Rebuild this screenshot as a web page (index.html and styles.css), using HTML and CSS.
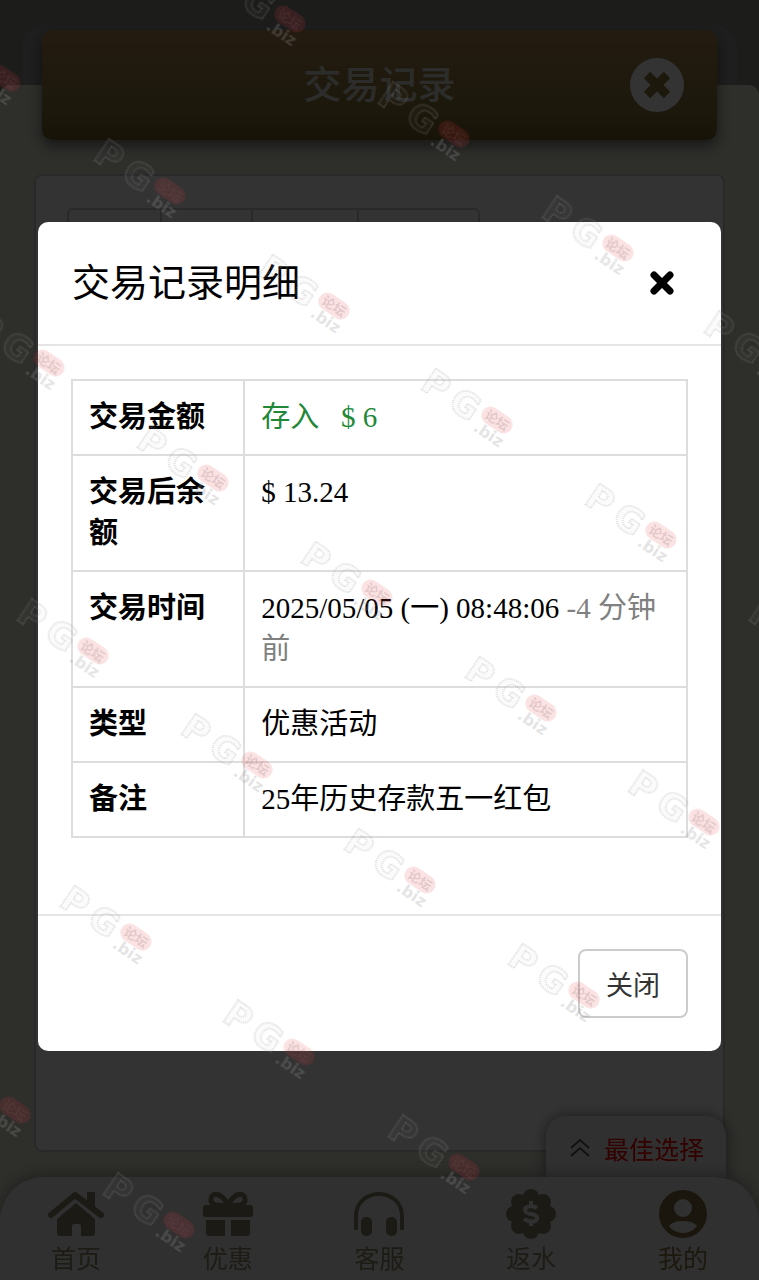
FILE: index.html
```html
<!DOCTYPE html>
<html lang="zh-CN">
<head>
    <meta charset="UTF-8">
    <meta name="viewport" content="width=device-width, initial-scale=1.0">
    <title>交易记录</title>
    <link rel="stylesheet" href="styles.css">
</head>
<body>

    <div class="page">
        <header class="page-header">
            <div class="title-bar">
                <h1>交易记录</h1>
                <button class="title-close" type="button" aria-label="关闭页面">
                    <svg viewBox="0 0 54 54" width="54" height="54">
                        <circle cx="27" cy="27" r="27"/>
                        <path d="M17 17L37 37M37 17L17 37"/>
                    </svg>
                </button>
            </div>
        </header>
        <main class="content">
            <section class="card">
                <ul class="filter">
                    <li class="short"></li>
                    <li class="short"></li>
                    <li class="medium"></li>
                    <li class="long"></li>
                </ul>
            </section>
        </main>
    </div>

    <div class="bottom">
        <button class="best" type="button">
            <svg viewBox="0 0 20 20" width="20" height="20"><path d="M1 10L10 2L19 10M1 18L10 10L19 18"/></svg>
            <span>最佳选择</span>
        </button>
        <nav class="nav">
            <a href="#">
                <svg viewBox="0 0 56 50" width="56" height="50">
                    <path class="line" d="M3 26L27 6L53 26"/>
                    <path d="M39 3h8v17l-8-7zM28 14L47 30v14q0 3-3 3H33V37q0-2-2-2h-5q-2 0-2 2v10H12q-3 0-3-3V30z"/>
                </svg>
                <span>首页</span>
            </a>
            <a href="#">
                <svg viewBox="0 0 56 50" width="56" height="50">
                    <path class="ring" d="M28 16C22 4 12 2 11 10C10 16 17 17 28 16C39 17 46 16 45 10C44 2 34 4 28 16Z"/>
                    <path d="M5 16h46q2 0 2 2v8q0 2-2 2H5q-2 0-2-2v-8q0-2 2-2zM6 31h19v16H9q-3 0-3-3zM31 31h19v13q0 3-3 3H31z"/>
                </svg>
                <span>优惠</span>
            </a>
            <a href="#">
                <svg viewBox="0 0 56 50" width="56" height="50">
                    <path class="band" d="M5 41V27C5 14 15 5 28 5S51 14 51 27V41"/>
                    <rect x="10" y="28" width="11" height="19" rx="5"/>
                    <rect x="35" y="28" width="11" height="19" rx="5"/>
                </svg>
                <span>客服</span>
            </a>
            <a href="#">
                <svg viewBox="0 0 56 50" width="56" height="50">
                    <circle cx="28" cy="25" r="20"/>
                    <circle cx="28" cy="8" r="8"/>
                    <circle cx="28" cy="42" r="8"/>
                    <circle cx="11" cy="25" r="8"/>
                    <circle cx="45" cy="25" r="8"/>
                    <circle cx="16" cy="13" r="8"/>
                    <circle cx="40" cy="13" r="8"/>
                    <circle cx="16" cy="37" r="8"/>
                    <circle cx="40" cy="37" r="8"/>
                    <path class="cut-line" d="M34 19C31 17 22 16 22 21C22 27 34 23 34 29C34 34 25 33 21 30M28 12V17M28 32V37"/>
                </svg>
                <span>返水</span>
            </a>
            <a class="current" href="#">
                <svg viewBox="0 0 56 50" width="56" height="50">
                    <circle cx="28" cy="25" r="24"/>
                    <circle class="cut" cx="28" cy="19" r="9"/>
                    <path class="cut" d="M14 37Q18 32 28 32T42 37Q37 44 28 44T14 37Z"/>
                </svg>
                <span>我的</span>
            </a>
        </nav>
    </div>

    <div class="overlay">
        <div class="modal" role="dialog" aria-modal="true" aria-labelledby="modalTitle">
            <div class="modal-header">
                <h2 id="modalTitle">交易记录明细</h2>
                <button class="modal-close" type="button" aria-label="关闭">
                    <svg viewBox="0 0 26 26" width="26" height="26"><path d="M5 5L21 21M21 5L5 21"/></svg>
                </button>
            </div>
            <div class="modal-body">
                <table class="detail">
                    <tr>
                        <th scope="row">交易金额</th>
                        <td class="income">存入 &nbsp; $ 6</td>
                    </tr>
                    <tr>
                        <th scope="row">交易后余额</th>
                        <td>$ 13.24</td>
                    </tr>
                    <tr>
                        <th scope="row">交易时间</th>
                        <td>2025/05/05 (一) 08:48:06 <span class="ago">-4 分钟前</span></td>
                    </tr>
                    <tr>
                        <th scope="row">类型</th>
                        <td>优惠活动</td>
                    </tr>
                    <tr>
                        <th scope="row">备注</th>
                        <td>25年历史存款五一红包</td>
                    </tr>
                </table>
            </div>
            <div class="modal-footer">
                <button class="btn" type="button">关闭</button>
            </div>
        </div>
    </div>

    <svg class="watermark" aria-hidden="true">
        <defs>
            <g id="mark">
                <g transform="rotate(34)">
                    <text class="mark-logo" x="-70" y="17">P</text>
                    <text class="mark-logo" x="-35" y="17">G</text>
                    <rect class="mark-badge" x="-17" y="-9" width="34" height="18" rx="9"/>
                    <text class="mark-cn" x="0" y="5">论坛</text>
                    <text class="mark-biz" x="1" y="22">.biz</text>
                </g>
            </g>
        </defs>
    </svg>

    <script>
        const watermark = document.querySelector('.watermark');

        // 斜向平铺水印
        const marks = [
            [290, 19], [5, 78], [454, 134], [170, 191],
            [618, 248], [334, 306], [780, 363], [49, 363],
            [497, 420], [213, 478], [661, 535], [377, 593],
            [93, 651], [825, 651], [541, 708], [257, 765],
            [704, 822], [420, 880], [136, 937], [584, 995],
            [299, 1052], [15, 1110], [464, 1167], [179, 1225]
        ];

        marks.forEach(([x, y]) => {
            const mark = document.createElementNS('http://www.w3.org/2000/svg', 'use');
            mark.setAttribute('href', '#mark');
            mark.setAttribute('x', x);
            mark.setAttribute('y', y);
            watermark.appendChild(mark);
        });
    </script>

</body>
</html>
```

FILE: styles.css
```css
* {
    box-sizing: border-box;
}

body {
    margin: 0;
    background-color: #8c8c87;
    color: #000;
    font-family: "Liberation Serif", "Noto Sans CJK SC", serif;
    font-size: 29px;
    line-height: 41px;
}

h1, h2 {
    margin: 0;
}

button {
    font-family: inherit;
    cursor: pointer;
}

.page {
    display: flex;
    flex-direction: column;
    min-height: 100vh;
}

.page-header {
    position: relative;
    height: 59px;
    margin: 26px 22px 0;
    padding: 4px 20px 0;
    border-radius: 20px 20px 0 0;
    background-color: #96969b;
}

.title-bar {
    display: grid;
    grid-template-columns: 54px 1fr 54px;
    align-items: center;
    height: 110px;
    padding: 0 33px;
    border-radius: 10px;
    background: linear-gradient(#b48750, #8c783c 75%, #785f28);
    box-shadow: 0 6px 14px rgba(0, 0, 0, 0.5);
}

.title-bar h1 {
    grid-column: 2;
    text-align: center;
    color: #dcdfd5;
    font-size: 38px;
    font-weight: 500;
}

.title-close {
    padding: 0;
    border: 0;
    background: none;
}

.title-close svg {
    display: block;
    fill: #fff;
}

.title-close path {
    stroke: #8c783c;
    stroke-width: 9;
}

.content {
    flex: 1;
    display: flex;
    padding: 89px 34px 128px;
    background-color: #e4e4d6;
    border-radius: 10px 10px 0 0;
}

.card {
    flex: 1;
    padding: 32px 31px;
    border: 2px solid #ccc;
    border-radius: 8px;
    background-color: #fff;
}

.filter {
    display: inline-flex;
    height: 69px;
    margin: 0;
    padding: 0;
    border: 2px solid #ccc;
    border-radius: 6px;
    list-style: none;
}

.filter li + li {
    border-left: 2px solid #ccc;
}

.filter .short {
    width: 91px;
}

.filter .medium {
    width: 106px;
}

.filter .long {
    width: 121px;
}

.bottom {
    position: fixed;
    left: 0;
    right: 0;
    bottom: 0;
    display: flex;
    flex-direction: column;
}

.best {
    display: flex;
    align-self: flex-end;
    align-items: center;
    gap: 14px;
    height: 61px;
    margin-right: 33px;
    padding: 2px 22px 0 24px;
    border: 0;
    border-radius: 20px 20px 0 0;
    background-color: #f0f0f0;
    box-shadow: 0 0 14px rgba(0, 0, 0, 0.5);
    color: #f00;
    font-size: 25px;
}

.best svg {
    fill: none;
    stroke: #555;
    stroke-width: 2;
}

.nav {
    position: relative;
    display: flex;
    height: 103px;
    padding-top: 12px;
    border-radius: 44px 44px 0 0;
    background-color: #f0f0f2;
    box-shadow: 0 -3px 14px rgba(0, 0, 0, 0.3);
}

.nav a {
    flex: 1;
    display: flex;
    flex-direction: column;
    align-items: center;
    color: #8c8765;
    font-size: 25px;
    text-decoration: none;
}

.nav svg {
    fill: #87826a;
}

.nav .line {
    fill: none;
    stroke: #87826a;
    stroke-width: 6;
    stroke-linecap: round;
    stroke-linejoin: round;
}

.nav .ring {
    fill: none;
    stroke: #87826a;
    stroke-width: 5;
}

.nav .band {
    fill: none;
    stroke: #87826a;
    stroke-width: 4;
}

.nav .cut {
    fill: #f0f0f2;
}

.nav .cut-line {
    fill: none;
    stroke: #f0f0f2;
    stroke-width: 4;
}

.nav .current {
    color: #8c7846;
}

.nav .current svg > :first-child {
    fill: #826940;
}

.overlay {
    position: fixed;
    inset: 0;
    padding: 222px 5% 0;
    background-color: rgba(0, 0, 0, 0.8);
    overflow: auto;
}

.modal {
    border-radius: 10px;
    background-color: #fff;
}

.modal-header {
    display: flex;
    justify-content: space-between;
    align-items: center;
    height: 124px;
    padding: 0 34px;
    border-bottom: 2px solid #e5e5e5;
}

.modal-header h2 {
    font-size: 38px;
    font-weight: 400;
}

.modal-close {
    padding: 0 12px;
    border: 0;
    background: none;
}

.modal-close svg {
    display: block;
    fill: none;
    stroke: #000;
    stroke-width: 7;
    stroke-linecap: round;
}

.modal-body {
    padding: 33px 33px 76px;
}

.detail {
    width: 100%;
    border-collapse: collapse;
    table-layout: fixed;
}

.detail th,
.detail td {
    padding: 16px;
    border: 2px solid #ddd;
    text-align: left;
    vertical-align: top;
}

.detail th {
    width: 28%;
}

.income {
    color: #218838;
}

.ago {
    color: #808080;
}

.modal-footer {
    display: flex;
    justify-content: flex-end;
    padding: 33px;
    border-top: 2px solid #e5e5e5;
}

.btn {
    height: 69px;
    padding: 0 26px;
    border: 2px solid #ccc;
    border-radius: 8px;
    background-color: #fff;
    color: #333;
    font-size: 27px;
}

.watermark {
    position: fixed;
    left: 0;
    top: 0;
    width: 100%;
    height: 100%;
    pointer-events: none;
}

.watermark text {
    text-anchor: middle;
    fill: rgba(150, 150, 150, 0.25);
    font-family: "DejaVu Sans", "Noto Sans CJK SC", sans-serif;
    font-weight: 700;
}

.watermark .mark-logo {
    fill: rgba(150, 150, 150, 0.04);
    stroke: rgba(150, 150, 150, 0.3);
    stroke-width: 2;
    stroke-dasharray: 1 1;
    font-size: 35px;
}

.watermark .mark-badge {
    fill: rgba(230, 50, 60, 0.14);
}

.watermark .mark-cn {
    fill: rgba(120, 90, 90, 0.2);
    font-size: 13px;
}

.watermark .mark-biz {
    font-size: 16px;
}
```
